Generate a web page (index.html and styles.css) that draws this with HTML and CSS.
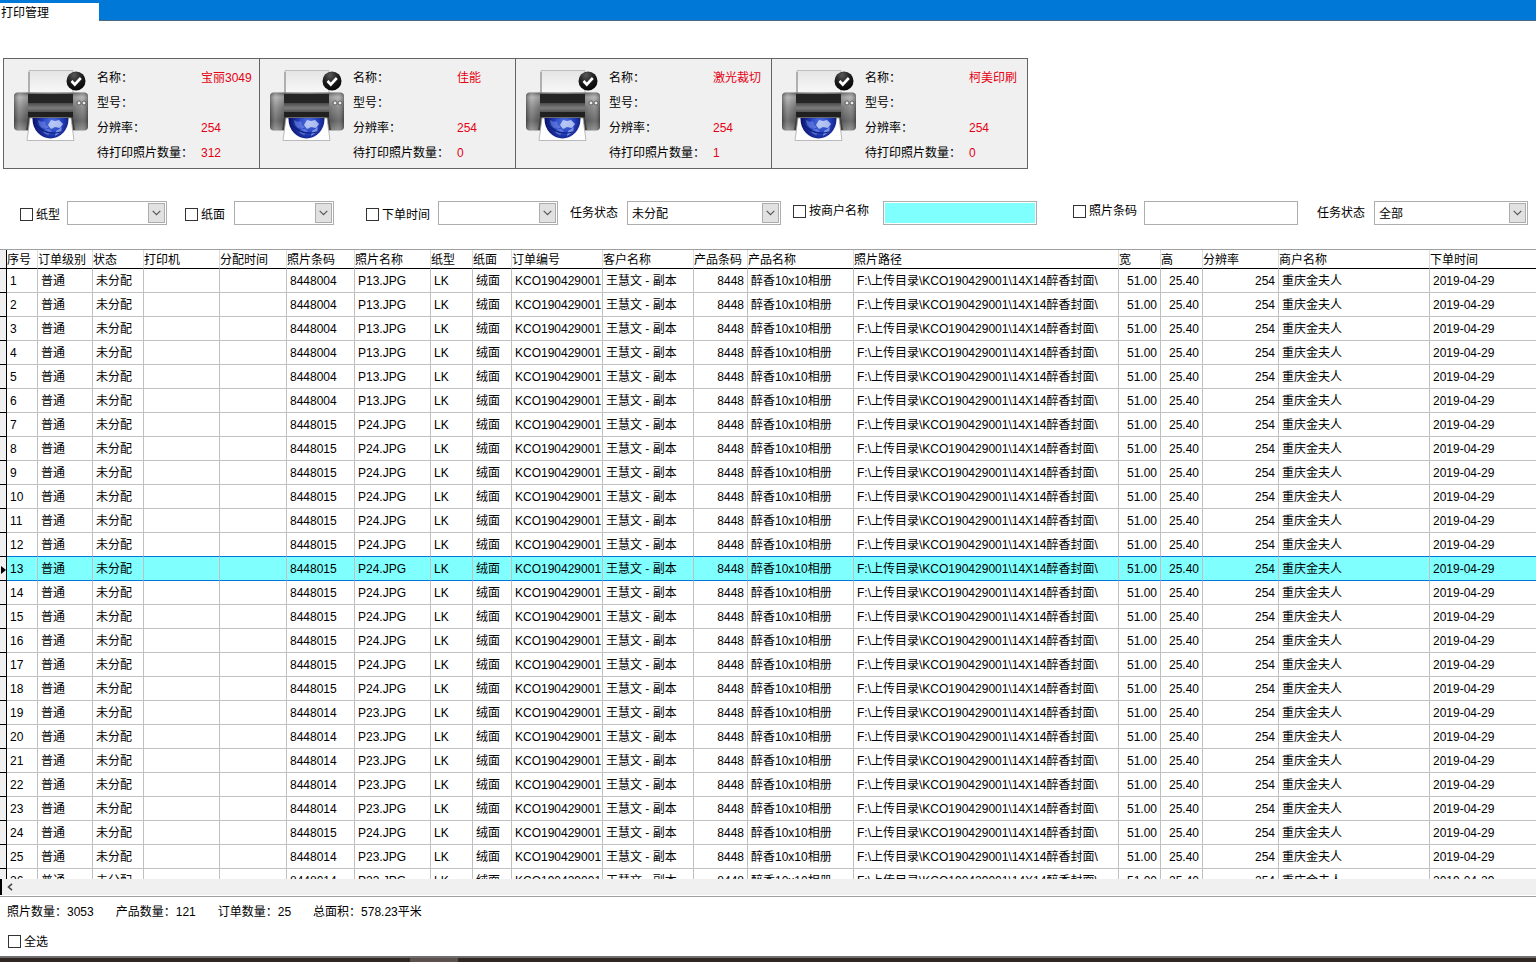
FILE: index.html
```html
<!DOCTYPE html>
<html lang="zh-CN">
<head>
<meta charset="utf-8">
<meta name="viewport" content="width=device-width, initial-scale=1">
<title>打印管理</title>
<link rel="stylesheet" href="styles.css">
</head>
<body>
<svg class="defs" aria-hidden="true">
  <defs>
    <linearGradient id="bodyMetal" x1="0" y1="0" x2="0" y2="1">
      <stop offset="0" stop-color="#6e6e6e"/>
      <stop offset=".12" stop-color="#b0b0b0"/>
      <stop offset=".4" stop-color="#808080"/>
      <stop offset=".75" stop-color="#5a5a5a"/>
      <stop offset="1" stop-color="#8a8a8a"/>
    </linearGradient>
    <linearGradient id="bodyShade" x1="0" y1="0" x2="1" y2="0">
      <stop offset="0" stop-color="#222" stop-opacity=".45"/>
      <stop offset=".08" stop-color="#ddd" stop-opacity=".2"/>
      <stop offset=".2" stop-color="#222" stop-opacity=".2"/>
      <stop offset=".5" stop-color="#999" stop-opacity=".1"/>
      <stop offset=".78" stop-color="#222" stop-opacity=".2"/>
      <stop offset=".92" stop-color="#ddd" stop-opacity=".15"/>
      <stop offset="1" stop-color="#222" stop-opacity=".45"/>
    </linearGradient>
    <linearGradient id="paper" x1="0" y1="0" x2="0" y2="1">
      <stop offset="0" stop-color="#e4e4e4"/>
      <stop offset="1" stop-color="#fafafa"/>
    </linearGradient>
    <linearGradient id="panel" x1="0" y1="0" x2="0" y2="1">
      <stop offset="0" stop-color="#4a4a4a"/>
      <stop offset=".5" stop-color="#7d7d7d"/>
      <stop offset="1" stop-color="#484848"/>
    </linearGradient>
    <radialGradient id="globe" cx=".55" cy=".6" r=".55">
      <stop offset="0" stop-color="#5378e6"/>
      <stop offset=".5" stop-color="#2440bd"/>
      <stop offset="1" stop-color="#080f60"/>
    </radialGradient>
    <radialGradient id="badge" cx=".4" cy=".2" r=".9">
      <stop offset="0" stop-color="#5a5a5a"/>
      <stop offset=".5" stop-color="#191919"/>
      <stop offset="1" stop-color="#000"/>
    </radialGradient>
    <clipPath id="sheetClip"><path d="M15 49h44v21H15z"/></clipPath>
    <symbol id="printer" viewBox="0 0 76 76">
      <path d="M16 1.500h44V26H16z" fill="url(#paper)" stroke="#b4b4b4" stroke-width=".8"/>
      <path d="M16 3v22" stroke="#888" stroke-width="1"/>
      <rect x="1" y="23.500" width="74" height="38" rx="4" fill="url(#bodyMetal)"/>
      <rect x="1" y="23.500" width="74" height="38" rx="4" fill="url(#bodyShade)"/>
      <path d="M15 25h45v9H15z" fill="#252525"/>
      <path d="M15 34h45v10H15z" fill="url(#panel)"/>
      <path d="M15 43h45v6H15z" fill="#202020"/>
      <path d="M15 48h45l2 13H13z" fill="#404040"/>
      <path d="M17 49h41l3 22.500H14z" fill="#fff" stroke="#aaa" stroke-width=".8"/>
      <g clip-path="url(#sheetClip)">
        <ellipse cx="37.500" cy="50" rx="18" ry="19.500" fill="url(#globe)"/>
        <path d="M25 51l4 2 3-1 1 4 3 2-3 2-4-1-3-3z" fill="#7d98ee" opacity=".5"/>
        <path d="M38 51l4 1 4-1 4 4-3 4-5-1-4 2-3-4z" fill="#e3ebff" opacity=".7"/>
        <path d="M43 62l6-4-1 5-6 4z" fill="#b5c5fc" opacity=".6"/>
        <path d="M30 61l6-1 3 3-4 3-4-2z" fill="#8fa8f6" opacity=".5"/>
        <path d="M22 55q10 12 26 8" fill="none" stroke="#0c1f83" stroke-width="1.200"/>
      </g>
      <circle cx="66" cy="34" r="2" fill="#eee" stroke="#444" stroke-width=".8"/>
      <circle cx="71" cy="34" r="2" fill="#eee" stroke="#444" stroke-width=".8"/>
      <circle cx="63" cy="12" r="9.500" fill="url(#badge)"/>
      <path d="M58.500 12l3.300 3.500 6-6.500" fill="none" stroke="#fff" stroke-width="2.600"/>
    </symbol>
    <symbol id="chevron" viewBox="0 0 9 6">
      <path d="M.7.8l3.800 3.800L8.300.8" fill="none" stroke="#555" stroke-width="1.200"/>
    </symbol>
  </defs>
</svg>

<header class="tabbar"><a class="tab" href="#">打印管理</a></header>

<main class="main">
  <section class="printers" aria-label="打印机">
    <article class="printer">
      <svg class="printer-icon" aria-hidden="true"><use href="#printer"/></svg>
      <dl class="specs">
        <dt>名称：</dt><dd>宝丽3049</dd>
        <dt>型号：</dt><dd></dd>
        <dt>分辨率：</dt><dd>254</dd>
        <dt>待打印照片数量：</dt><dd>312</dd>
      </dl>
    </article>
    <article class="printer">
      <svg class="printer-icon" aria-hidden="true"><use href="#printer"/></svg>
      <dl class="specs">
        <dt>名称：</dt><dd>佳能</dd>
        <dt>型号：</dt><dd></dd>
        <dt>分辨率：</dt><dd>254</dd>
        <dt>待打印照片数量：</dt><dd>0</dd>
      </dl>
    </article>
    <article class="printer">
      <svg class="printer-icon" aria-hidden="true"><use href="#printer"/></svg>
      <dl class="specs">
        <dt>名称：</dt><dd>激光裁切</dd>
        <dt>型号：</dt><dd></dd>
        <dt>分辨率：</dt><dd>254</dd>
        <dt>待打印照片数量：</dt><dd>1</dd>
      </dl>
    </article>
    <article class="printer">
      <svg class="printer-icon" aria-hidden="true"><use href="#printer"/></svg>
      <dl class="specs">
        <dt>名称：</dt><dd>柯美印刷</dd>
        <dt>型号：</dt><dd></dd>
        <dt>分辨率：</dt><dd>254</dd>
        <dt>待打印照片数量：</dt><dd>0</dd>
      </dl>
    </article>
  </section>

  <form class="filters">
    <div class="filter filter-type">
      <label class="check"><input type="checkbox">纸型</label>
      <span class="combo"><select aria-label="纸型"><option></option></select><span class="arrow"><svg><use href="#chevron"/></svg></span></span>
    </div>
    <div class="filter filter-face">
      <label class="check"><input type="checkbox">纸面</label>
      <span class="combo"><select aria-label="纸面"><option></option></select><span class="arrow"><svg><use href="#chevron"/></svg></span></span>
    </div>
    <div class="filter filter-date">
      <label class="check"><input type="checkbox">下单时间</label>
      <span class="combo combo-mid"><select aria-label="下单时间"><option></option></select><span class="arrow"><svg><use href="#chevron"/></svg></span></span>
    </div>
    <div class="filter filter-task">
      <label for="task">任务状态</label>
      <span class="combo combo-wide"><select id="task"><option>未分配</option></select><span class="arrow"><svg><use href="#chevron"/></svg></span></span>
    </div>
    <div class="filter filter-merchant">
      <label class="check check-raised"><input type="checkbox">按商户名称</label>
      <input class="text text-active" type="text" aria-label="商户名称">
    </div>
    <div class="filter filter-barcode">
      <label class="check check-raised"><input type="checkbox">照片条码</label>
      <input class="text" type="text" aria-label="照片条码">
    </div>
    <div class="filter filter-state">
      <label for="state">任务状态</label>
      <span class="combo combo-wide"><select id="state"><option>全部</option></select><span class="arrow"><svg><use href="#chevron"/></svg></span></span>
    </div>
  </form>

  <div class="grid">
    <table>
      <colgroup>
        <col class="w7"><col class="w31"><col class="w55"><col class="w51"><col class="w76"><col class="w67"><col class="w68"><col class="w76"><col class="w42"><col class="w39"><col class="w91"><col class="w91"><col class="w54"><col class="w106"><col class="w265"><col class="w42"><col class="w42"><col class="w76"><col class="w151"><col>
      </colgroup>
      <thead>
        <tr><th class="mark"></th><th>序号</th><th>订单级别</th><th>状态</th><th>打印机</th><th>分配时间</th><th>照片条码</th><th>照片名称</th><th>纸型</th><th>纸面</th><th>订单编号</th><th>客户名称</th><th>产品条码</th><th>产品名称</th><th>照片路径</th><th>宽</th><th>高</th><th>分辨率</th><th>商户名称</th><th>下单时间</th></tr>
      </thead>
      <tbody id="rows"></tbody>
    </table>
  </div>
</main>

<div class="scrollbar"><button type="button" aria-label="向左滚动"><svg viewBox="0 0 6 8"><path d="M5 .8L1.500 4 5 7.200" fill="none" stroke="#444" stroke-width="1.600"/></svg></button></div>

<footer class="footer">
  <div class="totals">
    <span>照片数量：3053</span><span>产品数量：121</span><span>订单数量：25</span><span>总面积：578.23平米</span>
  </div>
  <label class="check check-all"><input type="checkbox">全选</label>
</footer>
<div class="taskbar"><span class="taskbar-item"></span></div>
<script src="rows.js"></script>
</body>
</html>
```

FILE: styles.css
```css
* { box-sizing: border-box; }

body {
  margin: 0;
  height: 100vh;
  display: flex;
  flex-direction: column;
  overflow: hidden;
  background: #fff;
  color: #000;
  font: 12px/16px "Liberation Sans", "Noto Sans CJK SC", sans-serif;
}

input, select, button { font: inherit; color: inherit; margin: 0; }

.defs { position: absolute; width: 0; height: 0; }

.tabbar {
  flex: none;
  display: flex;
  height: 21px;
  padding-top: 3px;
  background: #0078d7;
  border-bottom: 1px solid #4a6a86;
}

.tab {
  width: 99px;
  height: 18px;
  padding-left: 1px;
  line-height: 20px;
  background: #fff;
  color: #000;
  text-decoration: none;
}

.main {
  flex: 1;
  min-height: 0;
  display: flex;
  flex-direction: column;
}

.printers {
  flex: none;
  display: flex;
  margin: 37px 0 0 3px;
}

.printer {
  display: flex;
  width: 256px;
  height: 111px;
  padding: 7px 0 0 9px;
  border: 1px solid #646464;
  border-right: 0;
  background: #f0f0f0;
}

.printer:last-child { width: 257px; border-right: 1px solid #646464; }

.printer-icon { flex: none; width: 76px; height: 76px; margin-top: 3px; }

.specs {
  display: grid;
  grid-template-columns: 104px auto;
  grid-auto-rows: 25px;
  margin: 0 0 0 8px;
  line-height: 25px;
  white-space: nowrap;
}

.specs dd { margin: 0; color: #e60012; }

.filters {
  flex: none;
  display: flex;
  height: 24px;
  margin: 32px 0 24px 20px;
}

.filter { display: flex; align-items: center; white-space: nowrap; }
.filter-type { gap: 7px; }
.filter-face { gap: 9px; margin-left: 18px; }
.filter-date { gap: 8px; margin-left: 32px; }
.filter-task { gap: 9px; margin-left: 12px; }
.filter-merchant { gap: 14px; margin-left: 12px; }
.filter-barcode { gap: 7px; margin-left: 36px; }
.filter-state { gap: 9px; margin-left: 19px; }

.check { display: flex; align-items: center; gap: 3px; padding-top: 3px; }
.check-raised { padding: 0 0 4px; }

.check input {
  appearance: none;
  width: 13px;
  height: 13px;
  border: 1px solid #333;
  background: #fff;
}

.combo { position: relative; width: 100px; height: 24px; }
.combo-mid { width: 120px; }
.combo-wide { width: 154px; }

.combo select {
  appearance: none;
  width: 100%;
  height: 100%;
  padding: 2px 20px 0 4px;
  border: 1px solid #adadad;
  border-radius: 0;
  background: #fff;
}

.arrow {
  position: absolute;
  top: 2px;
  right: 2px;
  bottom: 2px;
  width: 17px;
  display: flex;
  align-items: center;
  justify-content: center;
  border: 1px solid #adadad;
  background: #e1e1e1;
  pointer-events: none;
}

.arrow svg { width: 9px; height: 6px; }

.text {
  width: 154px;
  height: 24px;
  padding: 0 4px;
  border: 1px solid #adadad;
  background: #fff;
}

.text-active { background: #80ffff; box-shadow: inset 0 0 0 1px #fff; }

.grid {
  flex: 1;
  min-height: 0;
  overflow: hidden;
  border-top: 1px solid #a0a0a0;
}

table {
  width: 100%;
  table-layout: fixed;
  border-collapse: separate;
  border-spacing: 0;
}

.w7 { width: 7px; }
.w31 { width: 31px; }
.w39 { width: 39px; }
.w42 { width: 42px; }
.w51 { width: 51px; }
.w54 { width: 54px; }
.w55 { width: 55px; }
.w67 { width: 67px; }
.w68 { width: 68px; }
.w76 { width: 76px; }
.w91 { width: 91px; }
.w106 { width: 106px; }
.w151 { width: 151px; }
.w265 { width: 265px; }

th, td {
  overflow: hidden;
  white-space: nowrap;
  text-align: left;
  font-weight: normal;
}

th {
  height: 19px;
  padding: 2px 0 0;
  line-height: 16px;
  border-right: 1px solid #dcdcdc;
  border-bottom: 1px solid #000;
}

td {
  height: 24px;
  padding: 2px 3px 0;
  line-height: 21px;
  border-right: 1px solid #c0c0c0;
  border-bottom: 1px solid #c0c0c0;
}

th:last-child, td:last-child { border-right: 0; }

.code { padding-right: 0; }
.num { text-align: right; }

.mark {
  padding: 2px 0 0;
  background: #f0f0f0;
  border-right: 1px solid #000;
  border-bottom: 1px solid #000;
}

.mark svg { display: block; width: 5px; height: 8px; margin-left: 1px; }

.selected td { background: #80ffff; border-bottom-color: #0078d7; }
.selected .mark { background: #f0f0f0; border-bottom-color: #000; }
tr:has(+ .selected) td:not(.mark) { border-bottom-color: #0078d7; }

.scrollbar {
  flex: none;
  display: flex;
  height: 16px;
  background: #f0f0f0;
  border-left: 2px solid #000;
}

.scrollbar button {
  display: flex;
  align-items: center;
  justify-content: center;
  width: 16px;
  padding: 0;
  border: 0;
  background: none;
}

.scrollbar svg { width: 6px; height: 8px; }

.footer {
  flex: none;
  margin-top: 1px;
  border-top: 1px solid #a0a0a0;
  border-bottom: 2px solid #6e6e6e;
}

.totals {
  display: flex;
  gap: 22px;
  height: 29px;
  padding-left: 7px;
  line-height: 31px;
}

.check-all { width: 60px; height: 30px; margin-left: 8px; padding: 1px 0 0; }

.taskbar { flex: none; display: flex; height: 4px; background: #302622; }
.taskbar-item { width: 48px; margin-left: 410px; background: #5c504d; }
```

FILE: rows.js
```js
const photos = [
  { from: 1, to: 6, code: "8448004", name: "P13.JPG" },
  { from: 7, to: 18, code: "8448015", name: "P24.JPG" },
  { from: 19, to: 23, code: "8448014", name: "P23.JPG" },
  { from: 24, to: 24, code: "8448015", name: "P24.JPG" },
  { from: 25, to: 26, code: "8448014", name: "P23.JPG" }
];
const selectedRow = 13;
const marker = '<svg viewBox="0 0 5 8"><path d="M0 0l5 4-5 4z"/></svg>';

const cell = (text, type = "") => `<td class="${type}">${text}</td>`;

const row = (index, photo) => {
  const selected = index === selectedRow;
  return `<tr class="${selected ? "selected" : ""}">` + [
    cell(selected ? marker : "", "mark"),
    cell(index), cell("普通"), cell("未分配"), cell(""), cell(""),
    cell(photo.code), cell(photo.name), cell("LK"), cell("绒面"),
    cell("KCO190429001", "code"), cell("王慧文 - 副本"), cell("8448", "num"),
    cell("醉香10x10相册"), cell("F:\\上传目录\\KCO190429001\\14X14醉香封面\\"),
    cell("51.00", "num"), cell("25.40", "num"), cell("254", "num"),
    cell("重庆金夫人"), cell("2019-04-29")
  ].join("") + "</tr>";
};

let html = "";
for (const photo of photos) {
  for (let i = photo.from; i <= photo.to; i++) html += row(i, photo);
}
document.getElementById("rows").innerHTML = html;
```
